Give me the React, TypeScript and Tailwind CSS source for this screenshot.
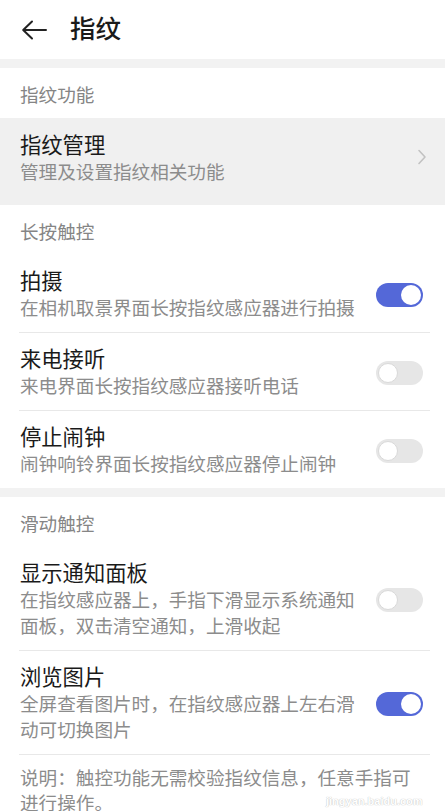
import type { ReactNode } from "react";

const FONT = "font-['Roboto','Noto_Sans_CJK_SC',sans-serif]";

type RowProps = {
  title: string;
  desc: string;
  on: boolean;
  divider?: boolean;
};

function Toggle({ on }: { on: boolean }) {
  return (
    <div
      className={`flex h-[24px] w-[47px] shrink-0 items-center rounded-full px-[2px] ${
        on ? "justify-end bg-[#5468d8]" : "justify-start bg-[#e6e6e6]"
      }`}
    >
      <div
        className={`h-[20px] w-[20px] rounded-full bg-white ${
          on ? "" : "border border-[#d9d9d9]"
        }`}
      />
    </div>
  );
}

function SectionTitle({ children }: { children: ReactNode }) {
  return (
    <div className="px-[20px] pt-[15px] pb-[9px] text-[18.6px] leading-[26px] text-[#858585]">
      {children}
    </div>
  );
}

function SwitchRow({ title, desc, on, divider = true }: RowProps) {
  return (
    <div className="px-[20px]">
      <div className="flex items-center gap-[16px] pt-[13px] pb-[10px] pr-[2px]">
        <div className="min-w-0 flex-1">
          <div className="text-[21.3px] leading-[28px] text-[#1a1a1a]">{title}</div>
          <div className="text-[18.6px] leading-[26px] text-[#8c8c8c]">{desc}</div>
        </div>
        <Toggle on={on} />
      </div>
      {divider ? <div className="ml-[-1px] mr-[-5px] h-px bg-[#e8e8e8]" /> : null}
    </div>
  );
}

function Band() {
  return <div className="h-[9px] bg-[#f2f2f2]" />;
}

export default function App() {
  return (
    <div className={`relative h-[811px] w-[445px] overflow-hidden bg-white ${FONT}`}>
      <header className="flex h-[59px] items-center px-[20px]">
        <svg width="28" height="22" viewBox="0 0 28 22" className="mr-[22px] text-[#222]">
          <path
            d="M26 11H3.5M12 2.5L3.2 11l8.8 8.5"
            fill="none"
            stroke="currentColor"
            strokeWidth="2"
            strokeLinecap="round"
            strokeLinejoin="round"
          />
        </svg>
        <h1 className="text-[25.5px] font-medium leading-none text-[#1a1a1a]">指纹</h1>
      </header>

      <Band />

      <SectionTitle>指纹功能</SectionTitle>
      <div className="flex items-center bg-[#f0f0f0] pl-[20px] pr-[18px] pt-[14px] pb-[19px]">
        <div className="flex-1">
          <div className="text-[21.3px] leading-[28px] text-[#1a1a1a]">指纹管理</div>
          <div className="text-[18.6px] leading-[26px] text-[#8c8c8c]">管理及设置指纹相关功能</div>
        </div>
        <svg width="10" height="16" viewBox="0 0 10 16" className="mt-[-4px]">
          <path
            d="M2 1.5L8 8l-6 6.5"
            fill="none"
            stroke="#c2c2c2"
            strokeWidth="1.6"
            strokeLinecap="round"
            strokeLinejoin="round"
          />
        </svg>
      </div>

      <SectionTitle>长按触控</SectionTitle>
      <SwitchRow title="拍摄" desc="在相机取景界面长按指纹感应器进行拍摄" on />
      <SwitchRow title="来电接听" desc="来电界面长按指纹感应器接听电话" on={false} />
      <SwitchRow title="停止闹钟" desc="闹钟响铃界面长按指纹感应器停止闹钟" on={false} divider={false} />

      <Band />

      <SectionTitle>滑动触控</SectionTitle>
      <SwitchRow
        title="显示通知面板"
        desc="在指纹感应器上，手指下滑显示系统通知面板，双击清空通知，上滑收起"
        on={false}
      />
      <SwitchRow
        title="浏览图片"
        desc="全屏查看图片时，在指纹感应器上左右滑动可切换图片"
        on
      />

      <p className="px-[20px] pt-[12px] text-[18.6px] leading-[25px] text-[#8c8c8c]">
        说明：触控功能无需校验指纹信息，任意手指可进行操作。
      </p>

      {/* watermark sits over the note text, as in the screenshot */}
      <div className="pointer-events-none absolute left-[326px] top-[788px]">
        <span className="font-['Liberation_Sans',sans-serif] text-[11px] leading-[12px] font-bold text-white [text-shadow:0_0_1px_#c8c8c8,0_0_1px_#c8c8c8]">
          jingyan.baidu.com
        </span>
      </div>
    </div>
  );
}
